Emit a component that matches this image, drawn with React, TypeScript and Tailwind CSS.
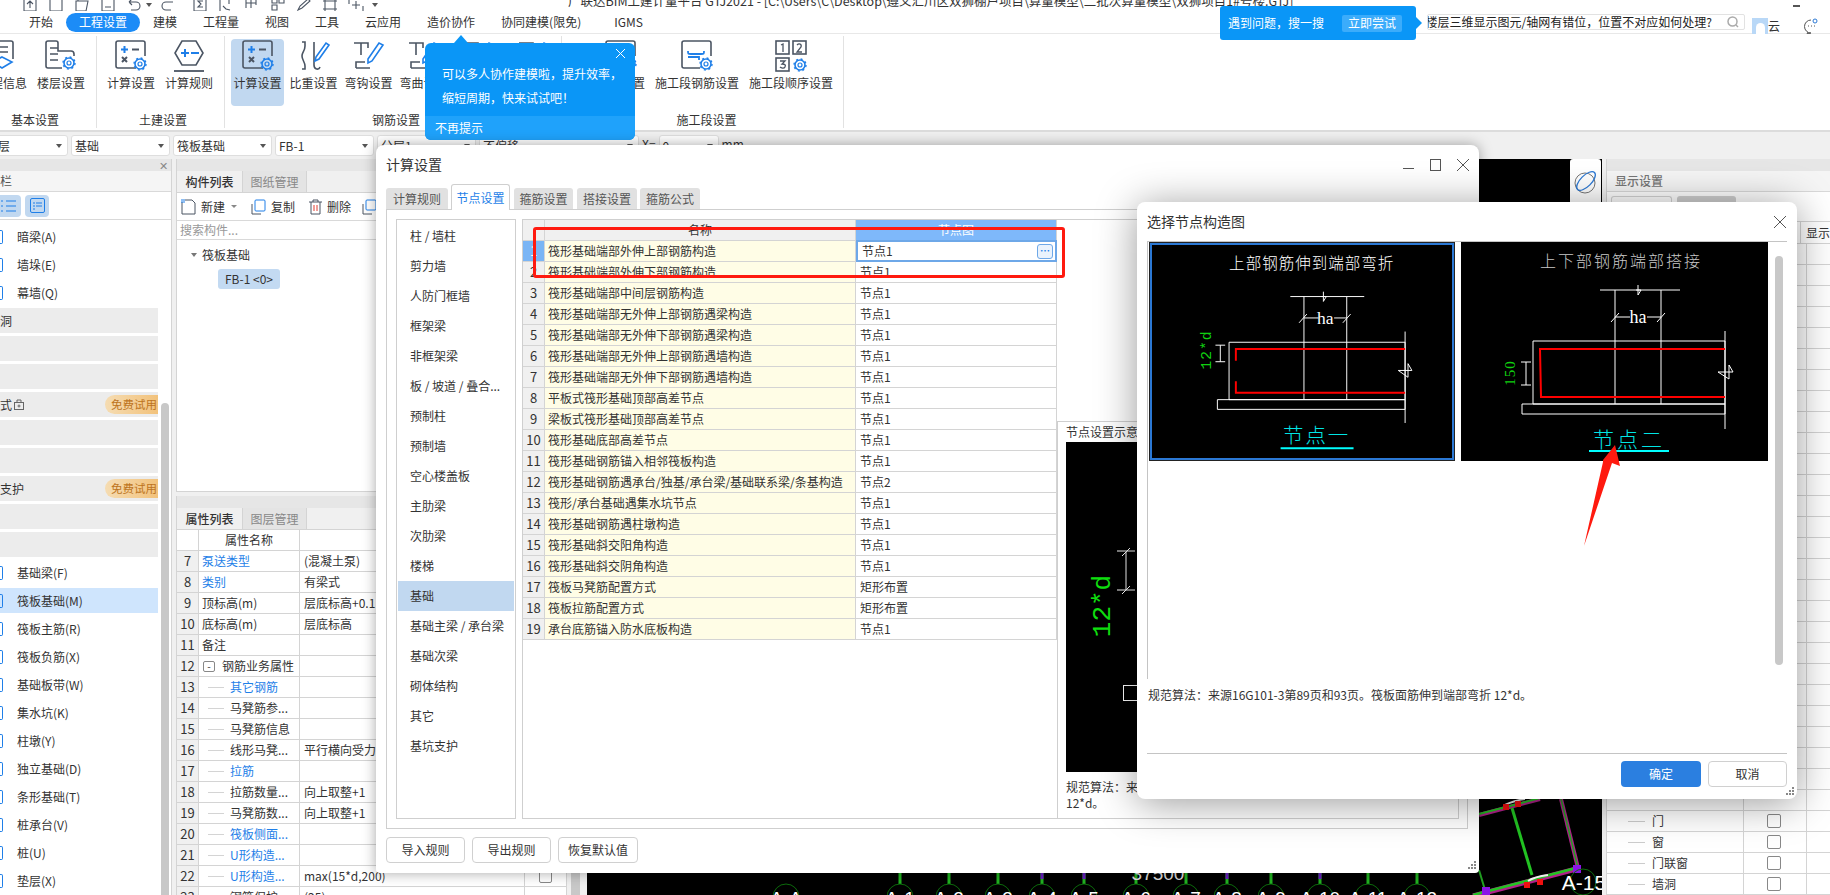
import React from "react";

const INK = "#4b5563";
const BLUE = "#1f7fe8";

function Gear({ x, y }: { x: number; y: number }) {
  return (
    <g fill="none" stroke={BLUE}>
      <circle cx={x} cy={y} r="2" strokeWidth="1.2" />
      <circle cx={x} cy={y} r="5" strokeWidth="1.6" />
      <circle cx={x} cy={y} r="6" strokeWidth="1.4" strokeDasharray="2 2.7" />
    </g>
  );
}

function CalcIcon() {
  return (
    <svg width="32" height="32" viewBox="0 0 32 32" fill="none">
      <path d="M21 28H3a2 2 0 0 1-2-2V3a2 2 0 0 1 2-2h25a2 2 0 0 1 2 2v13" stroke={INK} strokeWidth="1.6" />
      <path d="M6 9.500h7M9.500 6v7" stroke={BLUE} strokeWidth="2" />
      <path d="M17 9.500h7" stroke={INK} strokeWidth="2" />
      <path d="M7 17l5 5M12 17l-5 5" stroke={INK} strokeWidth="2" />
      <Gear x={25} y={24} />
    </svg>
  );
}

function RuleIcon() {
  return (
    <svg width="32" height="32" viewBox="0 0 32 32" fill="none">
      <path d="M9 1h14l7 12-7 12H9L2 13z" stroke={INK} strokeWidth="1.6" />
      <path d="M8 13h8M12 9v8" stroke={BLUE} strokeWidth="2" />
      <path d="M18 13h8" stroke={BLUE} strokeWidth="2" />
      <path d="M1 31h30" stroke={INK} strokeWidth="1.8" />
    </svg>
  );
}

function InfoIcon() {
  return (
    <svg width="32" height="32" viewBox="0 0 32 32" fill="none">
      <path d="M4 18V3a2 2 0 0 1 2-2h18a2 2 0 0 1 2 2v16" stroke={INK} strokeWidth="1.6" />
      <path d="M9 7h12M9 12h12" stroke={INK} strokeWidth="1.6" />
      <path d="M15 17l10 5-10 6-10-6z" stroke={BLUE} strokeWidth="1.6" />
    </svg>
  );
}

function FloorIcon() {
  return (
    <svg width="32" height="32" viewBox="0 0 32 32" fill="none">
      <path d="M17 28H3a2 2 0 0 1-2-2V3a2 2 0 0 1 2-2h8a2 2 0 0 1 2 2v8h13a3 3 0 0 1 3 3v2" stroke={INK} strokeWidth="1.6" />
      <path d="M5 8h8M5 14h8M5 20h8" stroke={INK} strokeWidth="1.6" />
      <Gear x={24} y={23} />
    </svg>
  );
}

function WeightIcon() {
  return (
    <svg width="32" height="32" viewBox="0 0 32 32" fill="none">
      <path d="M4 2h3v4c0 5-3 6-3 10s3 6 3 10v3H4" stroke={INK} strokeWidth="1.6" />
      <path d="M16 2v23c0 5 5 5 6 2" stroke={INK} strokeWidth="1.6" />
      <path d="M18 17L28 3l3 2-10 14-4 2z" stroke={BLUE} strokeWidth="1.6" />
    </svg>
  );
}

function HookIcon() {
  return (
    <svg width="32" height="32" viewBox="0 0 32 32" fill="none">
      <path d="M1 3h14v5M8 3v12M3 28h14M3 28v-6h9" stroke={INK} strokeWidth="1.6" />
      <path d="M15 19L26 3l4 2-11 16-4 2z" stroke={BLUE} strokeWidth="1.6" />
    </svg>
  );
}

function SegmentIcon() {
  return (
    <svg width="32" height="32" viewBox="0 0 32 32" fill="none">
      <path d="M19 28H3a2 2 0 0 1-2-2V3a2 2 0 0 1 2-2h25a2 2 0 0 1 2 2v13" stroke={INK} strokeWidth="1.6" />
      <path d="M7 11c0 3 0 3 3 3h10c3 0 3 0 3-3M7 17h11v3" stroke={BLUE} strokeWidth="1.8" />
      <Gear x={25} y={24} />
    </svg>
  );
}

function OrderIcon() {
  return (
    <svg width="32" height="32" viewBox="0 0 32 32" fill="none">
      <rect x="1" y="1" width="13" height="13" stroke={INK} strokeWidth="1.6" />
      <rect x="18" y="1" width="13" height="13" stroke={INK} strokeWidth="1.6" />
      <rect x="1" y="18" width="13" height="13" stroke={INK} strokeWidth="1.6" />
      <path d="M6 5l2-1v8M22 5c2-2 5-1 4 2l-4 5h5M5 21h5l-3 3c3 0 4 1 3 3s-4 1-5 0" stroke={INK} strokeWidth="1.3" />
      <Gear x={25} y={25} />
    </svg>
  );
}

function RibbonItem({ icon, label, active }: { icon: React.ReactNode; label: string; active?: boolean }) {
  return (
    <div className={`flex flex-col items-center rounded-sm ${active ? "bg-[#c1d8f0]" : ""} h-[67px] pt-[1px] text-[12px] leading-[16px] whitespace-nowrap`}>
      <div className="h-[32px] w-[32px]">{icon}</div>
      <div className="mt-[3px]">{label}</div>
    </div>
  );
}

function RibbonGroup({ label, className, labelClass, children }: { label: string; className: string; labelClass?: string; children: React.ReactNode }) {
  return (
    <div className={`flex h-[92px] shrink-0 flex-col border-r border-[#e2e2e2] ${className}`}>
      <div className="mt-[3px] flex h-[67px]">{children}</div>
      <div className={`flex h-[22px] items-end justify-center text-[12px] leading-[16px] ${labelClass ?? ""}`}>{label}</div>
    </div>
  );
}

function QuickIcon({ ml, d }: { ml: number; d: string }) {
  return (
    <svg width="16" height="16" viewBox="0 0 16 16" fill="none" stroke={INK} strokeWidth="1.1" className="shrink-0" style={{ marginLeft: ml }}>
      <path d={d} />
    </svg>
  );
}

function Select({ text, className }: { text: string; className: string }) {
  return (
    <div className={`flex h-[21px] shrink-0 items-center justify-between rounded-[3px] border border-[#dedede] bg-white text-[12px] ${className}`}>
      <span className="whitespace-nowrap">{text}</span>
      <span className="mr-[5px] h-0 w-0 border-x-[3px] border-t-[4px] border-x-transparent border-t-[#555]" />
    </div>
  );
}

const listRows: { text?: string; trial?: boolean; lock?: boolean; sel?: boolean; gray?: boolean; head?: boolean }[] = [
  { text: "暗梁(A)" },
  { text: "墙垛(E)" },
  { text: "幕墙(Q)" },
  { text: "洞", gray: true, head: true },
  { gray: true },
  { gray: true },
  { text: "式", gray: true, head: true, trial: true, lock: true },
  { gray: true },
  { gray: true },
  { text: "支护", gray: true, head: true, trial: true },
  { gray: true },
  { gray: true },
  { text: "基础梁(F)" },
  { text: "筏板基础(M)", sel: true },
  { text: "筏板主筋(R)" },
  { text: "筏板负筋(X)" },
  { text: "基础板带(W)" },
  { text: "集水坑(K)" },
  { text: "柱墩(Y)" },
  { text: "独立基础(D)" },
  { text: "条形基础(T)" },
  { text: "桩承台(V)" },
  { text: "桩(U)" },
  { text: "垫层(X)" },
];

function LeftPanel() {
  return (
    <div className="relative flex h-full w-[172px] shrink-0 flex-col overflow-hidden border-r border-[#d4d4d4] bg-white">
      <div className="flex h-[12px] shrink-0 items-center justify-end bg-[#e6e6e6] pr-[3px] text-[11px] leading-none text-[#888]">✕</div>
      <div className="flex h-[21px] shrink-0 items-center border-b border-[#d9d9d9] bg-[#f5f5f5] text-[12px] text-[#555]">栏</div>
      <div className="flex h-[28px] shrink-0 items-center gap-[4px] border-b border-[#d9d9d9]">
        <div className="flex h-[22px] w-[21px] items-center justify-end rounded-r-[4px] bg-[#c1d8f0] pr-[4px]">
          <svg width="17" height="14" viewBox="0 0 17 14" fill="none" stroke={BLUE} strokeWidth="1.2">
            <path d="M1 2h2M1 7h2M1 12h2M6 2h10M6 7h10M6 12h10" />
          </svg>
        </div>
        <div className="flex h-[22px] w-[24px] items-center justify-center rounded-[4px] bg-[#c1d8f0]">
          <svg width="15" height="15" viewBox="0 0 15 15" fill="none" stroke={BLUE} strokeWidth="1">
            <rect x="0.500" y="0.500" width="14" height="14" rx="1.500" />
            <path d="M3 5h2M6 5h6M3 8h2M6 8h6M3 11h2" />
          </svg>
        </div>
      </div>
      <div className="flex w-[158px] flex-col gap-[3px] pt-[4px]">
        {listRows.map((r, i) => (
          <div key={i} className={`flex h-[25px] shrink-0 items-center text-[12px] ${r.gray ? "bg-[#ececec]" : ""} ${r.sel ? "bg-[#cfe5fd]" : ""}`}>
            {!r.gray && <span className="mr-[14px] h-[14px] w-[3px] shrink-0 rounded-r-[2px] border border-l-0 border-[#1f7fe8]" />}
            {r.text && <span className="whitespace-nowrap text-[#333]">{r.text}</span>}
            {r.lock && (
              <svg width="10" height="11" viewBox="0 0 10 11" fill="none" stroke="#666" className="ml-[2px]">
                <rect x="0.500" y="3.500" width="9" height="7" />
                <path d="M3 3.500V1h4v2.500" />
                <circle cx="5" cy="7" r="1" />
              </svg>
            )}
            {r.trial && (
              <span className="ml-auto flex h-[19px] w-[53px] items-center overflow-hidden whitespace-nowrap rounded-l-full bg-gradient-to-r from-[#f5dcb2] to-[#f2c27b] pl-[6px] text-[11.500px] text-[#bd7420]">
                免费试用
              </span>
            )}
          </div>
        ))}
      </div>
      <div className="absolute left-[161px] top-[244px] h-[500px] w-[8px] rounded-t-full bg-[#c8c8c8]" />
    </div>
  );
}

function PanelTabs({ a, b }: { a: string; b: string }) {
  return (
    <>
      <div className="h-[12px] shrink-0 bg-[#e6e6e6]" />
      <div className="flex h-[22px] shrink-0 border-b border-[#d4d4d4] bg-[#f0f0f0] text-[12px]">
        <div className="flex w-[65px] items-center justify-center font-medium text-[#333]">{a}</div>
        <div className="flex w-[65px] items-center justify-center border-x border-[#d4d4d4] bg-[#e4e4e4] text-[#888]">{b}</div>
      </div>
    </>
  );
}

function ComponentPanel() {
  return (
    <div className="flex h-[333px] shrink-0 flex-col border-x border-b border-[#d4d4d4] bg-white text-[12px]">
      <PanelTabs a="构件列表" b="图纸管理" />
      <div className="flex h-[28px] shrink-0 items-center border-b border-[#d9d9d9] pl-[4px] text-[#333]">
        <svg width="15" height="16" viewBox="0 0 15 16" fill="none" stroke={INK}>
          <path d="M1 3v12h13V4l-3-3H4" />
          <path d="M0 1h4M0 3h4" stroke={BLUE} />
        </svg>
        <span className="ml-[5px]">新建</span>
        <span className="ml-[6px] h-0 w-0 border-x-[3px] border-t-[3px] border-x-transparent border-t-[#888]" />
        <svg width="15" height="16" viewBox="0 0 15 16" fill="none" stroke={INK} className="ml-[14px]">
          <rect x="4" y="1" width="10" height="11" rx="1" stroke={BLUE} />
          <path d="M1 5v10h9" />
        </svg>
        <span className="ml-[5px]">复制</span>
        <svg width="13" height="16" viewBox="0 0 13 16" fill="none" stroke={INK} className="ml-[14px]">
          <path d="M0 3h13M4 3V1h5v2M2 3v12h9V3" />
          <path d="M5 6v6M8 6v6" stroke="#e03c31" />
        </svg>
        <span className="ml-[5px]">删除</span>
        <svg width="15" height="16" viewBox="0 0 15 16" fill="none" stroke={INK} className="ml-[11px]">
          <rect x="4" y="1" width="10" height="10" rx="1" stroke={BLUE} />
          <path d="M1 5v10h9" />
        </svg>
      </div>
      <div className="flex h-[19px] shrink-0 items-center border-b border-[#d9d9d9] pl-[3px] text-[#999]">搜索构件...</div>
      <div className="flex h-[29px] shrink-0 items-center pl-[14px] text-[#333]">
        <span className="mr-[5px] h-0 w-0 border-x-[3px] border-t-[4px] border-x-transparent border-t-[#777]" />
        筏板基础
      </div>
      <div className="ml-[41px] flex h-[20px] w-[62px] items-center justify-center rounded-[3px] bg-[#c3daf2] text-[#333]">FB-1 &lt;0&gt;</div>
    </div>
  );
}

const propRows: { n: number; name: string; val?: string; blue?: boolean; tree?: boolean; fold?: boolean; check?: boolean }[] = [
  { n: 7, name: "泵送类型", val: "(混凝土泵)", blue: true },
  { n: 8, name: "类别", val: "有梁式", blue: true },
  { n: 9, name: "顶标高(m)", val: "层底标高+0.1" },
  { n: 10, name: "底标高(m)", val: "层底标高" },
  { n: 11, name: "备注" },
  { n: 12, name: "钢筋业务属性", fold: true },
  { n: 13, name: "其它钢筋", blue: true, tree: true },
  { n: 14, name: "马凳筋参...", tree: true },
  { n: 15, name: "马凳筋信息", tree: true },
  { n: 16, name: "线形马凳...", val: "平行横向受力筋", tree: true },
  { n: 17, name: "拉筋", blue: true, tree: true },
  { n: 18, name: "拉筋数量...", val: "向上取整+1", tree: true },
  { n: 19, name: "马凳筋数...", val: "向上取整+1", tree: true },
  { n: 20, name: "筏板侧面...", blue: true, tree: true },
  { n: 21, name: "U形构造...", blue: true, tree: true },
  { n: 22, name: "U形构造...", val: "max(15*d,200)", blue: true, tree: true, check: true },
  { n: 23, name: "钢筋保护...", val: "(25)", tree: true },
];

function PropertyPanel() {
  return (
    <div className="flex min-h-0 flex-1 flex-col overflow-hidden border-x border-[#d4d4d4] bg-white text-[12px] text-[#333]">
      <PanelTabs a="属性列表" b="图层管理" />
      <div className="flex h-[21px] shrink-0 border-b border-[#d4d4d4]">
        <div className="w-[22px] border-r border-[#d4d4d4]" />
        <div className="flex w-[101px] items-center justify-center border-r border-[#d4d4d4]">属性名称</div>
        <div className="w-[225px] border-r border-[#d4d4d4]" />
      </div>
      {propRows.map((r) => (
        <div key={r.n} className="flex h-[21px] shrink-0 border-b border-[#d4d4d4]">
          <div className="flex w-[22px] shrink-0 items-center justify-center border-r border-[#d4d4d4] bg-[#f0f0f0] text-[13px]">{r.n}</div>
          <div className={`flex w-[101px] shrink-0 items-center whitespace-nowrap border-r border-[#d4d4d4] ${r.blue ? "text-[#1f7fe8]" : ""} ${r.tree ? "pl-[9px]" : "pl-[3px]"}`}>
            {r.tree && <span className="mr-[6px] h-[1px] w-[16px] bg-[#d4d4d4]" />}
            {r.fold && <span className="ml-[1px] mr-[7px] flex h-[11px] w-[12px] items-center justify-center rounded-[2px] border border-[#888] text-[10px] leading-none">-</span>}
            {r.name}
          </div>
          <div className="flex w-[225px] shrink-0 items-center whitespace-nowrap border-r border-[#d4d4d4] pl-[4px]">{r.val}</div>
          <div className="flex flex-1 items-center justify-center">
            {r.check && <span className="h-[13px] w-[13px] rounded-[2px] border border-[#888]" />}
          </div>
        </div>
      ))}
    </div>
  );
}

const axes = [
  [786, "A-A"], [900, "A-1"], [949, "A-2"], [998, "A-3"], [1042, "A-4"], [1084, "A-5"], [1136, "A-6"],
  [1186, "A-7"], [1227, "A-8"], [1271, "A-9"], [1320, "A-10"], [1368, "A-11"], [1417, "A-12"],
] as const;

function CanvasDrawing() {
  return (
    <svg viewBox="587 159 1015 736" className="h-full w-full" fill="none">
      {axes.map(([x, t], i) => (
        <g key={t}>
          {i > 0 && <path d={`M${x} 870V884`} stroke="#22b422" strokeWidth="3" />}
          {[4, 5, 8, 10].includes(i) && <path d={`M${x} 873V879`} stroke="#6a1fc2" strokeWidth="3" />}
          <circle cx={x} cy="897" r="13" stroke="#0d6b0d" />
          <text x={x} y="905" fill="#fff" fontSize="19" textAnchor="middle" fontFamily="Liberation Sans">{t}</text>
        </g>
      ))}
      <text x="1158" y="880" fill="#ddd" fontSize="19" textAnchor="middle" fontFamily="Liberation Sans">37500</text>
      <path d="M1473 896L1580 868" stroke="#b0208a" strokeWidth="5" />
      <path d="M1473 895L1580 867" stroke="#22c322" strokeWidth="2.500" />
      <path d="M1479 815L1540 799" stroke="#b0208a" strokeWidth="4" />
      <path d="M1479 814L1540 798" stroke="#22c322" strokeWidth="2" />
      <path d="M1512 808L1532 875" stroke="#22c322" strokeWidth="3" />
      <path d="M1561 799L1578 868" stroke="#b0208a" strokeWidth="4" />
      <path d="M1561 799L1578 868" stroke="#22a322" strokeWidth="1.500" />
      <path d="M1479 870L1485 890" stroke="#22a322" strokeWidth="2" />
      <path d="M1528 881c6-4 12-5 20-6M1505 805c6-3 12-5 20-6" stroke="#eee" strokeWidth="2" />
      <rect x="1524" y="882" width="6" height="6" fill="#f01010" />
      <rect x="1537" y="879" width="6" height="6" fill="#f01010" />
      <rect x="1503" y="804" width="6" height="6" fill="#f01010" />
      <rect x="1515" y="801" width="6" height="6" fill="#f01010" />
      <rect x="1573" y="865" width="8" height="8" fill="#8a14e6" />
      <rect x="1482" y="887" width="8" height="8" fill="#8a14e6" />
      <circle cx="1583" cy="882" r="13" stroke="#0d6b0d" />
      <text x="1584" y="890" fill="#fff" fontSize="21" textAnchor="middle" fontFamily="Liberation Sans">A-15</text>
    </svg>
  );
}

const ruleRows: [string, string][] = [
  ["筏形基础端部外伸上部钢筋构造", "节点1"],
  ["筏形基础端部外伸下部钢筋构造", "节点1"],
  ["筏形基础端部中间层钢筋构造", "节点1"],
  ["筏形基础端部无外伸上部钢筋遇梁构造", "节点1"],
  ["筏形基础端部无外伸下部钢筋遇梁构造", "节点1"],
  ["筏形基础端部无外伸上部钢筋遇墙构造", "节点1"],
  ["筏形基础端部无外伸下部钢筋遇墙构造", "节点1"],
  ["平板式筏形基础顶部高差节点", "节点1"],
  ["梁板式筏形基础顶部高差节点", "节点1"],
  ["筏形基础底部高差节点", "节点1"],
  ["筏形基础钢筋锚入相邻筏板构造", "节点1"],
  ["筏形基础钢筋遇承台/独基/承台梁/基础联系梁/条基构造", "节点2"],
  ["筏形/承台基础遇集水坑节点", "节点1"],
  ["筏形基础钢筋遇柱墩构造", "节点1"],
  ["筏形基础斜交阳角构造", "节点1"],
  ["筏形基础斜交阴角构造", "节点1"],
  ["筏板马凳筋配置方式", "矩形布置"],
  ["筏板拉筋配置方式", "矩形布置"],
  ["承台底筋锚入防水底板构造", "节点1"],
];

const categories = [
  "柱 / 墙柱", "剪力墙", "人防门框墙", "框架梁", "非框架梁", "板 / 坡道 / 叠合...", "预制柱", "预制墙", "空心楼盖板",
  "主肋梁", "次肋梁", "楼梯", "基础", "基础主梁 / 承台梁", "基础次梁", "砌体结构", "其它", "基坑支护",
];

function DialogButton({ children, className }: { children: React.ReactNode; className: string }) {
  return (
    <div className={`flex h-[26px] items-center justify-center rounded-[4px] border border-[#d0d0d0] bg-white text-[12px] text-[#333] ${className}`}>
      {children}
    </div>
  );
}

function Grip() {
  return (
    <svg width="9" height="9" viewBox="0 0 9 9" fill="#888" className="absolute bottom-[3px] right-[2px]">
      <rect x="6" y="0" width="2" height="2" />
      <rect x="3" y="3" width="2" height="2" />
      <rect x="6" y="3" width="2" height="2" />
      <rect x="0" y="6" width="2" height="2" />
      <rect x="3" y="6" width="2" height="2" />
      <rect x="6" y="6" width="2" height="2" />
    </svg>
  );
}

function SettingsDialog() {
  const tabs = [
    ["计算规则", "w-[62px] mr-[3px]"],
    ["节点设置", "w-[59px] mr-[4px]"],
    ["箍筋设置", "w-[59px] mr-[4px]"],
    ["搭接设置", "w-[60px] mr-[3px]"],
    ["箍筋公式", "w-[60px]"],
  ];
  return (
    <div className="absolute left-[376px] top-[145px] flex h-[728px] w-[1103px] flex-col rounded-t-[8px] rounded-b-[4px] bg-white pl-[10px] pr-[11px] text-[12px] text-[#333] shadow-[0_0_14px_rgba(0,0,0,0.35)]">
      <div className="flex h-[39px] shrink-0 items-center justify-between">
        <span className="text-[14px]">计算设置</span>
        <div className="mr-[-1px] flex items-center gap-[16px] text-[#555]">
          <span className="mt-[8px] h-[1px] w-[11px] bg-[#555]" />
          <span className="h-[12px] w-[11px] border border-[#555]" />
          <svg width="12" height="12" viewBox="0 0 12 12" stroke="#555">
            <path d="M0 0l12 12M12 0L0 12" />
          </svg>
        </div>
      </div>
      <div className="flex h-[25px] shrink-0 items-end">
        {tabs.map(([t, w], i) => (
          <div
            key={t}
            className={`flex items-center justify-center rounded-t-[3px] ${w} ${
              i === 1
                ? "relative z-10 -mb-px h-[26px] border border-b-0 border-[#cfcfcf] bg-white text-[#1f7fe8]"
                : "h-[21px] bg-[#e1e1e1] text-[#555]"
            }`}
          >
            {t}
          </div>
        ))}
      </div>
      <div className="flex h-[620px] shrink-0 gap-[6px] border border-[#cfcfcf] pb-[9px] pl-[9px] pr-[8px] pt-[9px]">
        <div className="flex w-[120px] shrink-0 flex-col border border-[#cfcfcf] pl-[1px] pr-[1px] pt-[1px]">
          {categories.map((c) => (
            <div
              key={c}
              className={`flex h-[30px] shrink-0 items-center whitespace-nowrap pl-[12px] ${c === "基础" ? "bg-[#c1d8f0]" : ""}`}
            >
              {c}
            </div>
          ))}
        </div>
        <div className="flex min-w-0 flex-1 border border-[#cfcfcf]">
          <div className="w-[534px] shrink-0">
            <div className="flex h-[21px] border-b border-[#d4d4d4]">
              <div className="w-[22px] shrink-0 border-r border-[#d4d4d4] bg-[#f0f0f0]" />
              <div className="flex w-[311px] shrink-0 items-center justify-center border-r border-[#d4d4d4] bg-[#f0f0f0]">名称</div>
              <div className="flex flex-1 items-center justify-center border-r border-[#d4d4d4] bg-[#7eb8fa] text-white">节点图</div>
            </div>
            {ruleRows.map(([name, val], i) => (
              <div key={i} className="flex h-[21px] border-b border-[#d4d4d4]">
                <div className={`flex w-[22px] shrink-0 items-center justify-center border-r border-[#d4d4d4] text-[13px] ${i === 0 ? "bg-[#7ab5f5] text-white" : "bg-[#f0f0f0]"}`}>{i + 1}</div>
                <div className="flex w-[311px] shrink-0 items-center whitespace-nowrap border-r border-[#d4d4d4] bg-[#fffde6] pl-[3px]">{name}</div>
                {i === 0 ? (
                  <div className="-my-px flex h-[22px] flex-1 items-center justify-between border-2 border-[#6ea8e8] pl-[4px] pr-[2px]">
                    {val}
                    <span className="flex h-[15px] w-[16px] items-center justify-center rounded-[3px] border border-[#6ea8e8] bg-[#eaf3fd] text-[10px] font-bold leading-none text-[#1f7fe8]">⋯</span>
                  </div>
                ) : (
                  <div className="flex flex-1 items-center border-r border-[#d4d4d4] pl-[4px]">{val}</div>
                )}
              </div>
            ))}
          </div>
          <div className="mt-[201px] flex min-w-0 flex-1 flex-col border-l border-t border-[#cfcfcf] pl-[8px]">
            <div className="flex h-[20px] shrink-0 items-center whitespace-nowrap">节点设置示意图</div>
            <div className="h-[330px] shrink-0 bg-black">
              <svg width="90" height="330" viewBox="0 0 90 330" fill="none">
                <text transform="translate(44 164) rotate(-90)" fill="#10e010" fontSize="26" textAnchor="middle" fontFamily="Liberation Mono">12*d</text>
                <path d="M60 110v38M51 109h18M51 148h18M56 114l8-8M56 152l8-8" stroke="#fff" />
                <rect x="57.500" y="243.500" width="30" height="15" stroke="#fff" />
              </svg>
            </div>
            <div className="mt-[7px] leading-[16px]">规范算法：来源16G101-3第89页和93页。筏板面筋伸到端部弯折</div>
            <div className="leading-[16px]">12*d。</div>
          </div>
        </div>
      </div>
      <div className="mt-[8px] flex gap-[7px]">
        <DialogButton className="w-[79px]">导入规则</DialogButton>
        <DialogButton className="w-[79px]">导出规则</DialogButton>
        <DialogButton className="w-[80px]">恢复默认值</DialogButton>
      </div>
      <Grip />
    </div>
  );
}

const cadFont = "Noto Sans CJK SC";

function NodeOne() {
  return (
    <svg viewBox="0 0 306 219" className="h-full w-full" fill="none">
      <text x="163" y="25" fill="#fff" fontSize="16" letterSpacing="1" fontWeight="300" textAnchor="middle" fontFamily={cadFont}>上部钢筋伸到端部弯折</text>
      <path d="M141 53h76M175 48v10l3-5-5 0M155 53v106M199 53v106M78 100h181v59H78zM259 89v94M66 159h193v10H66zM252 129h14l-4-7v14z" stroke="#fff" />
      <path d="M155 75h15M186 75h13M150 80l8-9M195 80l8-9" stroke="#fff" />
      <text x="177" y="81" fill="#fff" fontSize="18" textAnchor="middle" fontFamily="Liberation Serif">ha</text>
      <path d="M85 119v-12h174M85 140v12h174" stroke="#f00" strokeWidth="2" />
      <text transform="translate(59 108) rotate(-90)" fill="#10d010" fontSize="15" letterSpacing="1" textAnchor="middle" fontFamily="Liberation Mono">12*d</text>
      <path d="M69 103v17M64 103h10M64 120h10" stroke="#fff" />
      <text x="168" y="204" fill="#00e5e5" fontSize="21" letterSpacing="2" fontWeight="300" textAnchor="middle" fontFamily={cadFont}>节点一</text>
      <path d="M131 209h75" stroke="#0ff" strokeWidth="2" />
    </svg>
  );
}

function NodeTwo() {
  return (
    <svg viewBox="0 0 307 219" className="h-full w-full" fill="none">
      <text x="160" y="25" fill="#c8c8c8" fontSize="16" letterSpacing="2" fontWeight="300" textAnchor="middle" fontFamily={cadFont}>上下部钢筋端部搭接</text>
      <path d="M139 48h80M177 43v10l3-5-5 0M154 48v114M200 48v114M72 99h192v63H72zM264 89v98M61 162h203v10H61zM257 130h15l-4-7v14z" stroke="#fff" />
      <path d="M154 75h15M186 75h14M150 80l8-9M196 80l8-9" stroke="#fff" />
      <text x="177" y="81" fill="#fff" fontSize="18" textAnchor="middle" fontFamily="Liberation Serif">ha</text>
      <path d="M264 107H79l1 48h184" stroke="#f00" strokeWidth="2" />
      <text transform="translate(54 131) rotate(-90)" fill="#10d010" fontSize="15" letterSpacing="1" textAnchor="middle" fontFamily="Liberation Serif">150</text>
      <path d="M65 120v23M60 120h10M60 143h10" stroke="#fff" />
      <text x="168" y="205" fill="#00e5e5" fontSize="21" letterSpacing="3" fontWeight="300" textAnchor="middle" fontFamily={cadFont}>节点二</text>
      <path d="M128 209h80" stroke="#0ff" strokeWidth="2" />
    </svg>
  );
}

function NodeDialog() {
  return (
    <div className="absolute left-[1137px] top-[202px] flex h-[597px] w-[660px] flex-col rounded-[8px] bg-white px-[10px] text-[12px] text-[#333] shadow-[0_4px_40px_rgba(0,0,0,0.4)]">
      <div className="flex h-[40px] shrink-0 items-center justify-between border-b border-[#c4c4c4]">
        <span className="text-[14px]">选择节点构造图</span>
        <svg width="12" height="12" viewBox="0 0 12 12" stroke="#555" className="mr-[1px]">
          <path d="M0 0l12 12M12 0L0 12" />
        </svg>
      </div>
      <div className="flex h-[437px] shrink-0 border-l border-[#c4c4c4] pl-[1px]">
        <div className="h-[219px] w-[306px] shrink-0 border-[3px] border-[#2b78d4] bg-black outline outline-1 -outline-offset-1 outline-[#222]">
          <NodeOne />
        </div>
        <div className="ml-[6px] h-[219px] w-[307px] shrink-0 bg-black">
          <NodeTwo />
        </div>
        <div className="ml-[7px] mt-[14px] h-[409px] w-[8px] rounded-full bg-[#c8c8c8]" />
      </div>
      <div className="mt-[8px] flex h-[16px] shrink-0 items-center pl-[1px]">规范算法：来源16G101-3第89页和93页。筏板面筋伸到端部弯折 12*d。</div>
      <div className="mt-[50px] h-px shrink-0 bg-[#c4c4c4]" />
      <div className="mt-[7px] flex justify-end gap-[7px]">
        <div className="flex h-[26px] w-[80px] items-center justify-center rounded-[4px] bg-[#2b7fe0] text-white">确定</div>
        <DialogButton className="w-[79px]">取消</DialogButton>
      </div>
      <Grip />
    </div>
  );
}

const settingsRows = Array.from({ length: 27 }, (_, i) => i);

function RightPanel() {
  const tail = ["门", "窗", "门联窗", "墙洞"];
  return (
    <div className="flex h-full w-[224px] shrink-0 flex-col overflow-hidden border-l border-[#d4d4d4] bg-white text-[12px] text-[#333]">
      <div className="h-[12px] shrink-0 bg-[#e6e6e6]" />
      <div className="flex h-[21px] shrink-0 items-center border-b border-[#d9d9d9] bg-[#f5f5f5] pl-[8px] font-medium text-[#777]">显示设置</div>
      <div className="flex h-[30px] shrink-0 items-end gap-[5px] border-b border-[#d4d4d4] pl-[4px]">
        <div className="h-[25px] w-[61px] rounded-t-[3px] border border-b-0 border-[#d4d4d4]" />
        <div className="h-[25px] w-[59px] rounded-t-[3px] bg-[#cfcfcf]" />
      </div>
      <div className="flex h-[22px] shrink-0 border-b border-[#d4d4d4]">
        <div className="w-[137px] border-r border-[#d4d4d4]" />
        <div className="w-[63px] border-r border-[#d4d4d4]" />
        <div className="flex items-center whitespace-nowrap pl-[5px]">显示</div>
      </div>
      {settingsRows.map((i) => (
        <div key={i} className="flex h-[21px] shrink-0 border-b border-[#d4d4d4]">
          <div className="w-[137px] border-r border-[#d4d4d4]" />
          <div className="w-[63px] border-r border-[#d4d4d4]" />
        </div>
      ))}
      {tail.map((t) => (
        <div key={t} className="flex h-[21px] shrink-0 items-center border-b border-[#d4d4d4]">
          <div className="flex h-full w-[137px] items-center border-r border-[#d4d4d4] pl-[21px]">
            <span className="mr-[7px] h-px w-[17px] bg-[#ccc]" />
            {t}
          </div>
          <div className="flex h-full w-[63px] items-center border-r border-[#d4d4d4] pl-[23px]">
            <span className="h-[14px] w-[14px] rounded-[2px] border border-[#888]" />
          </div>
        </div>
      ))}
    </div>
  );
}

export default function App() {
  return (
    <div className="relative h-[895px] w-[1830px] overflow-hidden bg-[#f0f0f0] font-['Noto_Sans_CJK_SC','Liberation_Sans',sans-serif] text-[#333]">
      <div className="relative flex h-[11px] items-end overflow-hidden bg-white">
        <div className="mb-[-2px] flex items-center">
          <QuickIcon ml={22} d="M2 1h12v13H2zM8 11V4M5 7l3-3 3 3" />
          <QuickIcon ml={10} d="M2 1v13h12V1" />
          <QuickIcon ml={10} d="M2 14V4h12l-2 10zM4 4V1h8" />
          <QuickIcon ml={10} d="M2 14V1h12v13zM5 10h6" />
          <QuickIcon ml={10} d="M3 5h7a4 4 0 0 1 0 8H5M3 5l3-3M3 5l3 3" />
          <span className="ml-[4px] mr-[8px] h-0 w-0 border-x-[3px] border-t-[4px] border-x-transparent border-t-[#555]" />
          <QuickIcon ml={0} d="M13 5H6a4 4 0 0 0 0 8h5" />
          <span className="ml-[16px]" />
          <QuickIcon ml={0} d="M2 1h12v13H2zM11 4H6l3 3-3 3h5" />
          <QuickIcon ml={10} d="M2 14V1h9v6M5 9l3 3 4 1" />
          <QuickIcon ml={10} d="M2 11V2h10v6M2 6h10M7 2v9" />
          <QuickIcon ml={10} d="M2 6h5V1H2zM9 6h5V1H9zM2 13h5V8H2z" />
          <QuickIcon ml={10} d="M2 13l2-4 8-7 2 2-8 7zM1 15h14" />
          <QuickIcon ml={10} d="M3 1v14M13 1v14M1 4h14M1 12h14" />
          <QuickIcon ml={10} d="M1 1h6M1 1v6M15 15H9M15 15V9M8 4v8M4 8h8" />
          <span className="ml-[8px] h-0 w-0 border-x-[3px] border-t-[4px] border-x-transparent border-t-[#555]" />
        </div>
        <div className="absolute left-[568px] top-[-7px] whitespace-nowrap text-[12.500px] leading-[16px]">
          广联达BIM土建计量平台 GTJ2021 - [C:\Users\C\Desktop\遵义汇川区双狮棚户项目\算量模型\二批次算量模型\双狮项目1#号楼.GTJ]
        </div>
      </div>

      <div className="flex h-[23px] items-center gap-[26px] border-b border-[#e8e8e8] bg-white pl-[29px] text-[12px]">
        <span>开始</span>
        <span className="-mx-[13px] flex h-[19px] w-[74px] items-center justify-center rounded-full bg-[#1c8cf7] text-white">工程设置</span>
        <span>建模</span>
        <span>工程量</span>
        <span>视图</span>
        <span>工具</span>
        <span>云应用</span>
        <span>造价协作</span>
        <span>协同建模(限免)</span>
        <span className="ml-[7px]">IGMS</span>
        <div className="ml-auto mr-[85px] flex h-[16px] w-[318px] items-center overflow-hidden rounded-[2px] border border-[#e2e2e2] pr-[5px] text-[12px] text-[#222]">
          <div className="flex w-[284px] shrink-0 justify-end overflow-hidden">
            <span className="shrink-0 whitespace-nowrap">楼层三维显示图元/轴网有错位，位置不对应如何处理?</span>
          </div>
          <svg width="12" height="12" viewBox="0 0 12 12" fill="none" stroke="#aaa" strokeWidth="1.500" className="ml-auto">
            <circle cx="5.500" cy="5.500" r="4.500" />
            <path d="M9 9l2 2" />
          </svg>
        </div>
      </div>

      <div className="flex h-[98px] border-b-[2px] border-[#dcdcdc] bg-white pt-[2px]">
        <RibbonGroup label="基本设置" className="-ml-[26px] w-[123px]">
          <div className="w-[58px]"><RibbonItem icon={<InfoIcon />} label="工程信息" /></div>
          <div className="w-[58px]"><RibbonItem icon={<FloorIcon />} label="楼层设置" /></div>
        </RibbonGroup>
        <RibbonGroup label="土建设置" className="w-[128px] pl-[5px]">
          <div className="w-[58px]"><RibbonItem icon={<CalcIcon />} label="计算设置" /></div>
          <div className="w-[58px]"><RibbonItem icon={<RuleIcon />} label="计算规则" /></div>
        </RibbonGroup>
        <RibbonGroup label="钢筋设置" className="w-[337px] pl-[6px]">
          <div className="w-[56px]"><RibbonItem icon={<CalcIcon />} label="计算设置" active /></div>
          <div className="ml-[2px] w-[58px]"><RibbonItem icon={<WeightIcon />} label="比重设置" /></div>
          <div className="w-[58px]"><RibbonItem icon={<HookIcon />} label="弯钩设置" /></div>
          <div className="w-[58px]"><RibbonItem icon={<HookIcon />} label="弯曲设置" /></div>
          <div className="w-[58px]"><RibbonItem icon={<HookIcon />} label="损耗设置" /></div>
          <div className="w-[58px]"><RibbonItem icon={<HookIcon />} label="定尺设置" /></div>
        </RibbonGroup>
        <RibbonGroup label="施工段设置" className="w-[282px] pl-[30px]" labelClass="-ml-[22px]">
          <div className="w-[58px]"><RibbonItem icon={<SegmentIcon />} label="搭接设置" /></div>
          <div className="w-[94px]"><RibbonItem icon={<SegmentIcon />} label="施工段钢筋设置" /></div>
          <div className="w-[94px]"><RibbonItem icon={<OrderIcon />} label="施工段顺序设置" /></div>
        </RibbonGroup>
      </div>

      <div className="flex h-[27px] items-start gap-[3px] pt-[3px]">
        <Select text="首层" className="-ml-[22px] w-[90px] pl-[7px]" />
        <Select text="基础" className="w-[99px] pl-[3px]" />
        <Select text="筏板基础" className="w-[99px] pl-[3px]" />
        <Select text="FB-1" className="w-[99px] pl-[3px]" />
        <Select text="分层1" className="w-[99px] pl-[3px]" />
        <Select text="不偏移" className="w-[160px] pl-[3px]" />
        <span className="text-[12px]">X=</span>
        <Select text="0" className="w-[60px] pl-[3px]" />
        <span className="text-[12px]">mm</span>
      </div>

      <div className="flex h-[736px]">
        <LeftPanel />
        <div className="ml-[4px] flex h-full w-[391px] shrink-0 flex-col gap-[4px]">
          <ComponentPanel />
          <PropertyPanel />
        </div>
        <div className="ml-[4px] mr-[7px] w-[9px] shrink-0 bg-[#c8c8c8]" />
        <div className="relative h-full w-[1015px] shrink-0 bg-black">
          <CanvasDrawing />
          <div className="absolute left-[983px] top-0 flex h-[300px] w-[31px] justify-center rounded-[3px] bg-white pt-[10px]">
            <svg width="24" height="26" viewBox="0 0 24 26" fill="none" stroke="#2b78d4">
              <circle cx="11" cy="14" r="10" stroke="#777" />
              <ellipse cx="12" cy="12" rx="12" ry="5.500" transform="rotate(-45 12 12)" strokeWidth="1.300" />
            </svg>
          </div>
        </div>
        <div className="w-[4px] shrink-0" />
        <RightPanel />
      </div>

      <div className="absolute left-[425px] top-[43px] flex h-[97px] w-[210px] flex-col rounded-[6px] bg-[#0a96f7] text-[12px] text-white">
        <span className="absolute -top-[8px] left-[29px] h-0 w-0 border-x-[7px] border-b-[8px] border-x-transparent border-b-[#0a96f7]" />
        <svg width="9" height="9" viewBox="0 0 9 9" stroke="#fff" className="absolute right-[10px] top-[6px]">
          <path d="M0 0l9 9M9 0L0 9" />
        </svg>
        <div className="flex-1 pl-[17px] pt-[19px] leading-[24px]">
          <div className="whitespace-nowrap">可以多人协作建模啦，提升效率，</div>
          <div className="whitespace-nowrap">缩短周期，快来试试吧！</div>
        </div>
        <div className="flex h-[24px] items-center rounded-b-[6px] bg-[#1fa2fb] pl-[10px]">不再提示</div>
      </div>

      <div className="absolute left-[1220px] top-[6px] flex h-[34px] w-[196px] items-center rounded-[3px] bg-[#0a96f7] pl-[8px] text-[12px] text-white">
        遇到问题，搜一搜
        <span className="ml-[18px] flex h-[17px] w-[60px] items-center justify-center rounded-[2px] bg-[#3bacfb]">立即尝试</span>
        <span className="absolute -right-[6px] top-[11px] h-0 w-0 border-y-[6px] border-l-[6px] border-y-transparent border-l-[#0a96f7]" />
      </div>

      <div className="absolute left-[1752px] top-[15px] flex items-center text-[12px]">
        <span className="flex h-[16px] w-[16px] items-end justify-center bg-[#b9d8f7]">
          <span className="h-[11px] w-[9px] rounded-t-full bg-white" />
        </span>
        云
        <svg width="16" height="16" viewBox="0 0 16 16" fill="none" stroke="#555" className="ml-[23px]">
          <path d="M8 2a6.500 6.500 0 1 0 0 13c-1 0-3 1-4 1l1-2" />
          <circle cx="12" cy="3" r="2" stroke="#2b78d4" />
          <path d="M5 8h1M8 8h1M11 8h1" />
        </svg>
        <span className="ml-[14px] text-[14px]">?</span>
      </div>
      <span className="absolute left-[1793px] top-[5px] h-[2px] w-[7px] bg-[#555]" />

      <SettingsDialog />
      <NodeDialog />

      <div className="absolute left-[533px] top-[227px] h-[51px] w-[532px] rounded-[3px] border-[3px] border-[#ff1a0f]" />
      <svg width="40" height="105" viewBox="1580 443 40 105" className="absolute left-[1580px] top-[443px]">
        <polygon points="1615,445 1620,466 1612,463 1584,546 1603,462 1603,460" fill="#ff1a0f" />
      </svg>
    </div>
  );
}
